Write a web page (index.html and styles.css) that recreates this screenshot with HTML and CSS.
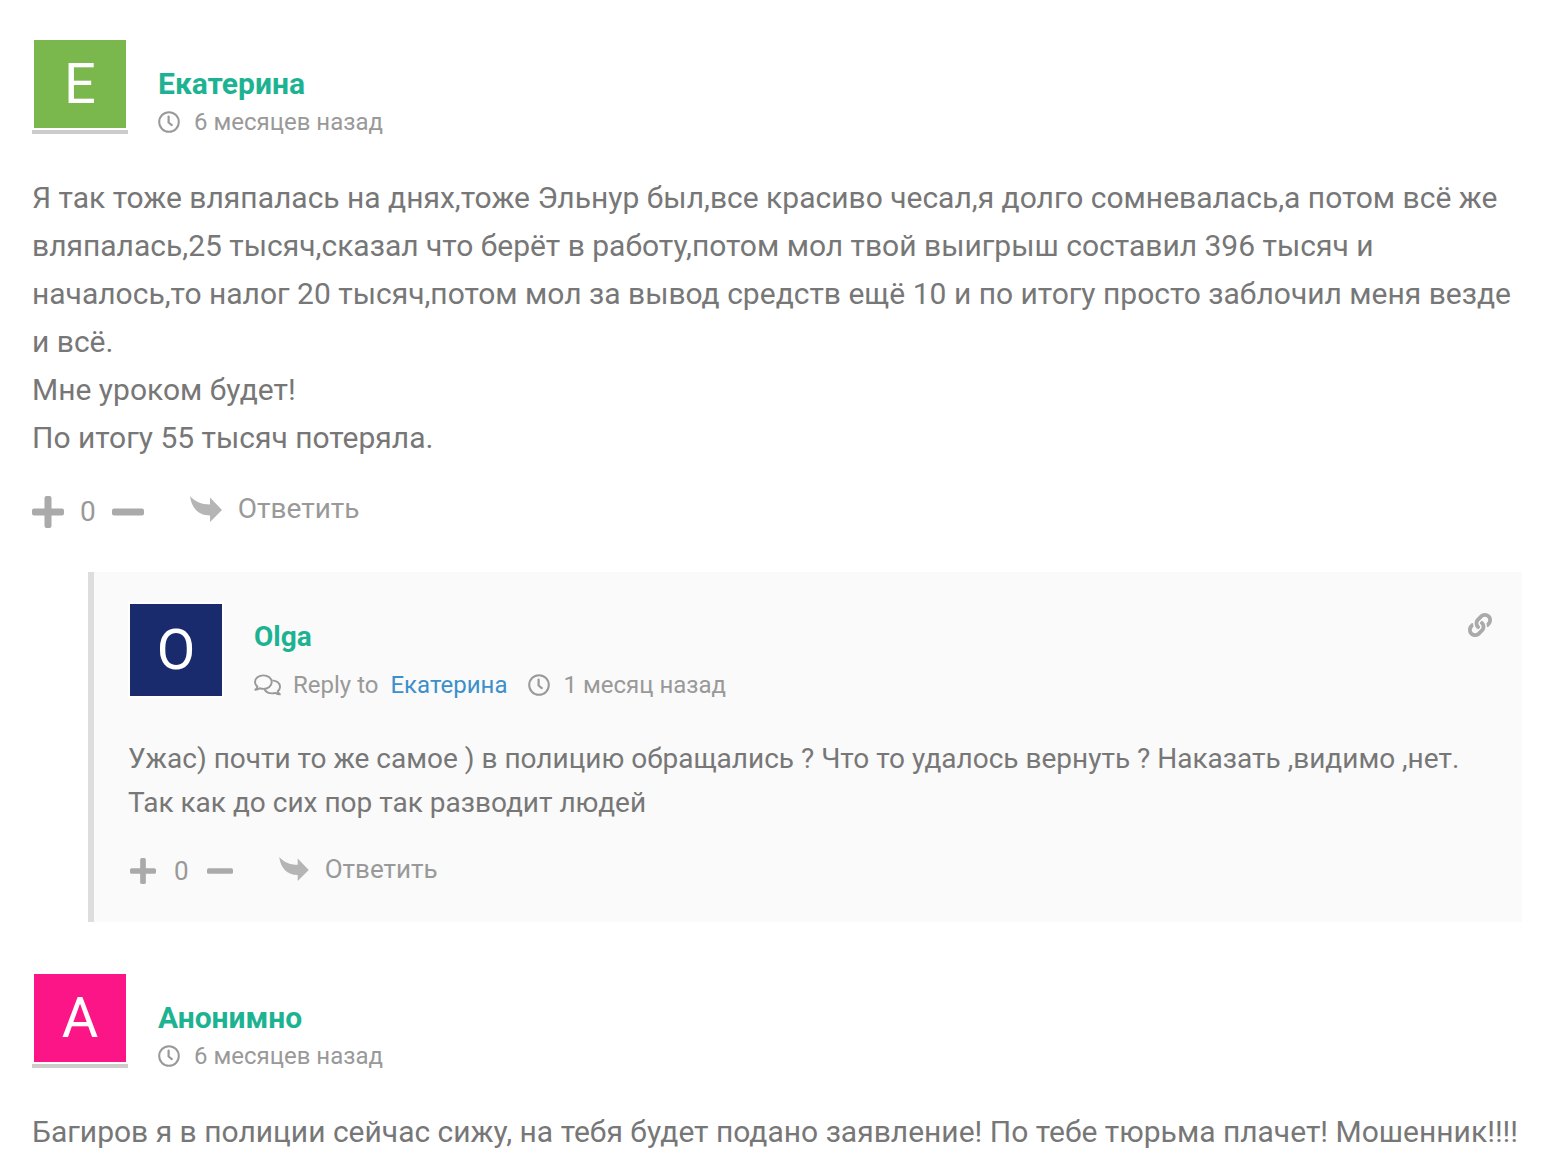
FILE: index.html
```html
<!DOCTYPE html>
<html lang="ru">
<head>
  <meta charset="UTF-8">
  <meta name="viewport" content="width=device-width, initial-scale=1.0">
  <title>Комментарии</title>
  <link rel="stylesheet" href="styles.css">
</head>
<body>
  <!-- Общие иконки -->
  <svg class="sprite" aria-hidden="true">
    <symbol id="clock" viewBox="0 0 22 22">
      <circle cx="11" cy="11" r="9.8" fill="none" stroke="currentColor" stroke-width="2"/>
      <path d="M10.600 5.500v6l3.200 2.600" fill="none" stroke="currentColor" stroke-width="2.200" stroke-linecap="round" stroke-linejoin="round"/>
    </symbol>
    <symbol id="plus" viewBox="0 0 32 32">
      <path d="M14.500 0h3q2 0 2 2v10.500H30q2 0 2 2v3q0 2-2 2H19.500V30q0 2-2 2h-3q-2 0-2-2V19.500H2q-2 0-2-2v-3q0-2 2-2h10.500V2q0-2 2-2z" fill="currentColor"/>
    </symbol>
    <symbol id="minus" viewBox="0 0 32 32">
      <rect y="12.500" width="32" height="7" rx="2" fill="currentColor"/>
    </symbol>
    <symbol id="reply" viewBox="0 0 32 26">
      <path d="M0 0c5 5.500 11 8.500 20 8.500V1.500L32 14 20 26v-6.500C8.500 19.500 1.500 12 0 0z" fill="currentColor"/>
    </symbol>
    <symbol id="link" viewBox="0 0 512 512">
      <path d="M326.612 185.391c59.747 59.809 58.927 155.698.36 214.590-.11.120-.24.250-.36.370l-67.200 67.200c-59.270 59.270-155.699 59.262-214.960 0-59.270-59.260-59.270-155.700 0-214.960l37.106-37.106c9.840-9.840 26.786-3.300 27.294 10.606.648 17.722 3.826 35.527 9.690 52.721 1.986 5.822.567 12.262-3.783 16.612l-13.087 13.087c-28.026 28.026-28.905 73.660-1.155 101.960 28.024 28.579 74.086 28.749 102.325.510l67.200-67.190c28.191-28.191 28.073-73.757 0-101.830-3.701-3.694-7.429-6.564-10.341-8.569a16.037 16.037 0 0 1-6.947-12.606c-.396-10.567 3.348-21.456 11.698-29.806l21.054-21.055c5.521-5.521 14.182-6.199 20.584-1.731a152.482 152.482 0 0 1 20.522 17.197zM467.547 44.449c-59.261-59.262-155.690-59.270-214.960 0l-67.200 67.200c-.120.120-.250.250-.360.370-58.566 58.892-59.387 154.781.360 214.590a152.454 152.454 0 0 0 20.521 17.196c6.402 4.468 15.064 3.789 20.584-1.731l21.054-21.055c8.350-8.350 12.094-19.239 11.698-29.806a16.037 16.037 0 0 0-6.947-12.606c-2.912-2.005-6.640-4.875-10.341-8.569-28.073-28.073-28.191-73.639 0-101.830l67.200-67.190c28.239-28.239 74.300-28.069 102.325.510 27.750 28.300 26.872 73.934-1.155 101.960l-13.087 13.087c-4.350 4.350-5.769 10.790-3.783 16.612 5.864 17.194 9.042 34.999 9.690 52.721.509 13.906 17.454 20.446 27.294 10.606l37.106-37.106c59.271-59.259 59.271-155.699.001-214.959z" fill="currentColor"/>
    </symbol>
    <symbol id="talk" viewBox="0 0 28 22">
      <g fill="none" stroke="currentColor" stroke-width="2" stroke-linejoin="round">
        <path d="M1.300 16c1.500-1 2.200-2.300 2.300-3.300C2 11.400 1 9.800 1 8c0-3.900 3.900-7 8.700-7s8.700 3.100 8.700 7-3.900 7-8.700 7c-1.300 0-2.500-.2-3.600-.6C4.700 15.400 3 16 1.300 16z"/>
        <path d="M19 6.200c4.500.3 8 3 8 6.600 0 1.800-.9 3.400-2.400 4.600.1 1 .8 2.200 2.200 3.300-1.800 0-3.400-.6-4.700-1.500-1.100.3-2.200.5-3.400.5-3.500 0-6.500-1.700-7.900-4.300"/>
      </g>
    </symbol>
  </svg>

  <main class="comments">
    <article class="comment">
      <header class="comment-header">
        <div class="avatar avatar-green">E</div>
        <div class="comment-info">
          <div class="author">Екатерина</div>
          <div class="meta">
            <span class="date"><svg class="icon-clock"><use href="#clock"/></svg>6 месяцев назад</span>
          </div>
        </div>
      </header>
      <div class="comment-text">
        <p>Я так тоже вляпалась на днях,тоже Эльнур был,все красиво чесал,я долго сомневалась,а потом всё же вляпалась,25 тысяч,сказал что берёт в работу,потом мол твой выигрыш составил 396 тысяч и началось,то налог 20 тысяч,потом мол за вывод средств ещё 10 и по итогу просто заблочил меня везде и всё.<br>
        Мне уроком будет!<br>
        По итогу 55 тысяч потеряла.</p>
      </div>
      <footer class="comment-footer">
        <div class="vote">
          <button type="button" aria-label="Нравится"><svg class="icon-vote"><use href="#plus"/></svg></button>
          <span class="count">0</span>
          <button type="button" aria-label="Не нравится"><svg class="icon-vote"><use href="#minus"/></svg></button>
        </div>
        <button type="button" class="answer"><svg class="icon-reply"><use href="#reply"/></svg>Ответить</button>
      </footer>
    </article>

    <article class="comment reply">
      <header class="comment-header">
        <div class="avatar avatar-blue">O</div>
        <div class="comment-info">
          <div class="author">Olga</div>
          <div class="meta">
            <span class="reply-to"><svg class="icon-talk"><use href="#talk"/></svg>Reply to <a href="#">Екатерина</a></span>
            <span class="date"><svg class="icon-clock"><use href="#clock"/></svg>1 месяц назад</span>
          </div>
        </div>
        <button type="button" class="permalink" aria-label="Ссылка на комментарий"><svg class="icon-link"><use href="#link"/></svg></button>
      </header>
      <div class="comment-text">
        <p>Ужас) почти то же самое ) в полицию обращались ? Что то удалось вернуть ? Наказать ,видимо ,нет. Так как до сих пор так разводит людей</p>
      </div>
      <footer class="comment-footer">
        <div class="vote">
          <button type="button" aria-label="Нравится"><svg class="icon-vote"><use href="#plus"/></svg></button>
          <span class="count">0</span>
          <button type="button" aria-label="Не нравится"><svg class="icon-vote"><use href="#minus"/></svg></button>
        </div>
        <button type="button" class="answer"><svg class="icon-reply"><use href="#reply"/></svg>Ответить</button>
      </footer>
    </article>

    <article class="comment">
      <header class="comment-header">
        <div class="avatar avatar-pink">A</div>
        <div class="comment-info">
          <div class="author">Анонимно</div>
          <div class="meta">
            <span class="date"><svg class="icon-clock"><use href="#clock"/></svg>6 месяцев назад</span>
          </div>
        </div>
      </header>
      <div class="comment-text">
        <p>Багиров я в полиции сейчас сижу, на тебя будет подано заявление! По тебе тюрьма плачет! Мошенник!!!!</p>
      </div>
    </article>
  </main>
</body>
</html>
```

FILE: styles.css
```css
*, *::before, *::after {
  box-sizing: border-box;
}
body {
  margin: 0;
  font-family: Roboto, sans-serif;
  background: #fff;
  color: #777;
}
p {
  margin: 0;
}
svg {
  display: block;
  flex: none;
}
button {
  padding: 0;
  border: 0;
  background: none;
  font: inherit;
  color: inherit;
  cursor: pointer;
}
.sprite {
  position: absolute;
  width: 0;
  height: 0;
}

.comments {
  padding: 38px 32px 16px;
}

/* Шапка комментария */
.comment-header {
  display: flex;
  align-items: flex-start;
  gap: 30px;
}
.avatar {
  display: flex;
  align-items: center;
  justify-content: center;
  flex: none;
  width: 96px;
  height: 96px;
  padding: 2px;
  border-bottom: 4px solid #ccc;
  background-clip: content-box;
  color: #fff;
  font-size: 56px;
  line-height: 1;
}
.avatar-green {
  background-color: #7ab84d;
}
.avatar-blue {
  background-color: #1a2b6d;
}
.avatar-pink {
  background-color: #fc1587;
}
.comment-info {
  flex: 1;
  padding-top: 26px;
}
.author {
  font-size: 30px;
  font-weight: 700;
  line-height: 40px;
  color: #1db392;
}
.meta {
  display: flex;
  gap: 20px;
  font-size: 24px;
  line-height: 36px;
  color: #999;
}
.date, .reply-to {
  display: flex;
  align-items: center;
}
.date {
  gap: 14px;
}
.reply-to {
  gap: 12px;
}
.reply-to a {
  color: #3d8fc9;
  text-decoration: none;
}
.icon-clock {
  width: 22px;
  height: 22px;
}
.icon-talk {
  width: 27px;
  height: 22px;
}
.icon-link {
  width: 24px;
  height: 24px;
}
.permalink {
  margin-top: 11px;
  color: #aaa;
}

.comment-text {
  margin-top: 34px;
  font-size: 30px;
  line-height: 48px;
}

/* Голосование и ответ */
.comment-footer {
  display: flex;
  align-items: center;
  gap: 46px;
  margin-top: 27px;
  font-size: 28px;
  line-height: 40px;
  color: #999;
}
.vote {
  display: flex;
  align-items: center;
  gap: 16px;
}
.icon-vote {
  width: 32px;
  height: 32px;
  color: #aaa;
}
.answer {
  display: flex;
  align-items: center;
  gap: 16px;
  padding-bottom: 6px;
}
.icon-reply {
  width: 32px;
  height: 26px;
  color: #b5b5b5;
}

/* Вложенный ответ */
.reply {
  margin: 37px 0 50px 56px;
  padding: 30px 30px 29px 34px;
  border-left: 6px solid #ddd;
  background: #fafafa;
}
.reply .avatar {
  padding: 0;
  border: 2px solid #fff;
}
.reply .comment-info {
  padding-top: 15px;
}
.reply .author {
  margin-bottom: 10px;
  font-size: 28px;
}
.reply .comment-text {
  font-size: 28px;
  line-height: 44px;
}
.reply .comment-footer {
  margin-top: 24px;
  padding-left: 2px;
  font-size: 26px;
}
.reply .vote {
  gap: 18px;
}
.reply .answer {
  padding-bottom: 4px;
}
.reply .icon-vote {
  width: 26px;
  height: 26px;
}
.reply .icon-reply {
  width: 30px;
  height: 24px;
}
```
